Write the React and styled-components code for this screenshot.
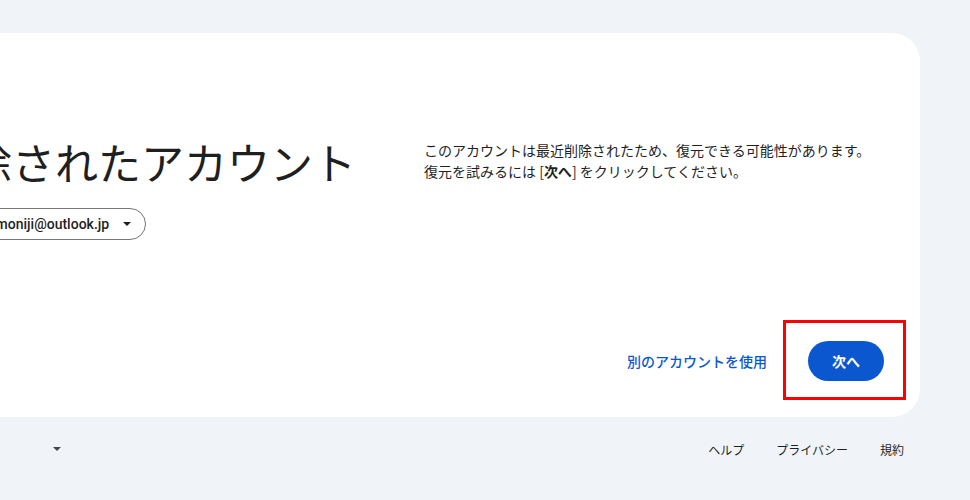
import React from 'react';
import styled, { createGlobalStyle } from 'styled-components';

const Global = createGlobalStyle`
  html, body {
    margin: 0;
    padding: 0;
    background: #f0f4f9;
    overflow: hidden;
  }
  body {
    font-family: Roboto, 'Noto Sans CJK JP', sans-serif;
    color: #1f1f1f;
  }
`;

const Page = styled.div`
  width: 1034px;
  margin-left: -114px;
  padding-top: 33px;
`;

const Card = styled.main`
  background: #fff;
  border-radius: 28px;
  padding: 0 36px 36px 36px;
  display: grid;
  grid-template-columns: 1fr 460px;
  grid-template-rows: auto auto;
`;

const LeftCol = styled.div`
  padding-top: 102px;
  padding-left: 4px;
`;

const Title = styled.h1`
  margin: 0;
  font-family: 'Noto Sans CJK JP', sans-serif;
  font-size: 43px;
  font-weight: 400;
  line-height: 52px;
  color: #1f1f1f;
  white-space: nowrap;
`;

const Chip = styled.div`
  display: inline-flex;
  align-items: center;
  gap: 8px;
  height: 30px;
  margin-top: 21px;
  padding: 0 14px 0 4px;
  border: 1px solid #747775;
  border-radius: 16px;
  font-family: Roboto, 'Noto Sans CJK JP', sans-serif;
  font-size: 14px;
  font-weight: 500;
  color: #1f1f1f;
`;

const Avatar = styled.span`
  width: 20px;
  height: 20px;
  border-radius: 50%;
  background: #5e97f6;
`;

const Caret = styled.span`
  width: 0;
  height: 0;
  margin-left: 6px;
  border-left: 4px solid transparent;
  border-right: 4px solid transparent;
  border-top: 4px solid ${(p) => p.$color || '#1f1f1f'};
`;

const RightCol = styled.div`
  padding-top: 107px;
`;

const Desc = styled.p`
  margin: 0;
  font-family: 'Noto Sans CJK JP', sans-serif;
  font-size: 14px;
  line-height: 21px;
  color: #1f1f1f;
  b {
    font-weight: 700;
  }
`;

const Actions = styled.div`
  grid-column: 2;
  display: flex;
  justify-content: flex-end;
  align-items: center;
  gap: 29px;
  margin-top: 101px;
`;

const TextButton = styled.button`
  height: 40px;
  padding: 0 12px;
  border: 0;
  background: none;
  font-family: 'Noto Sans CJK JP', sans-serif;
  font-size: 14px;
  font-weight: 500;
  color: #0b57d0;
  cursor: pointer;
`;

const Highlight = styled.span`
  position: relative;
  display: inline-flex;
  &::after {
    content: '';
    position: absolute;
    top: -21px;
    bottom: -19px;
    left: -25px;
    right: -22px;
    border: 3px solid #ff0000;
    pointer-events: none;
  }
`;

const PrimaryButton = styled.button`
  height: 40px;
  padding: 0 24px;
  border: 0;
  border-radius: 20px;
  background: #0b57d0;
  color: #fff;
  font-family: 'Noto Sans CJK JP', sans-serif;
  font-size: 14px;
  font-weight: 700;
  cursor: pointer;
`;

const Footer = styled.footer`
  display: flex;
  justify-content: space-between;
  align-items: center;
  margin-top: 16px;
  height: 32px;
  font-family: 'Noto Sans CJK JP', sans-serif;
  font-size: 12px;
  color: #1f1f1f;
`;

const LangSelect = styled.div`
  display: flex;
  align-items: center;
  justify-content: space-between;
  width: 159px;
  padding: 0 8px 0 16px;
`;

const Links = styled.nav`
  display: flex;
`;

const FootLink = styled.a`
  padding: 0 16px;
  color: #1f1f1f;
  text-decoration: none;
`;

export default function App() {
  return (
    <>
      <Global />
      <Page>
        <Card>
          <LeftCol>
            <Title>削除されたアカウント</Title>
            <Chip>
              <Avatar />
              ayakamoniji@outlook.jp
              <Caret />
            </Chip>
          </LeftCol>
          <RightCol>
            <Desc>
              このアカウントは最近削除されたため、復元できる可能性があります。
              <br />
              復元を試みるには [<b>次へ</b>] をクリックしてください。
            </Desc>
          </RightCol>
          <Actions>
            <TextButton>別のアカウントを使用</TextButton>
            <Highlight>
              <PrimaryButton>次へ</PrimaryButton>
            </Highlight>
          </Actions>
        </Card>
        <Footer>
          <LangSelect>
            日本語
            <Caret $color="#444746" />
          </LangSelect>
          <Links>
            <FootLink href="#">ヘルプ</FootLink>
            <FootLink href="#">プライバシー</FootLink>
            <FootLink href="#">規約</FootLink>
          </Links>
        </Footer>
      </Page>
    </>
  );
}
